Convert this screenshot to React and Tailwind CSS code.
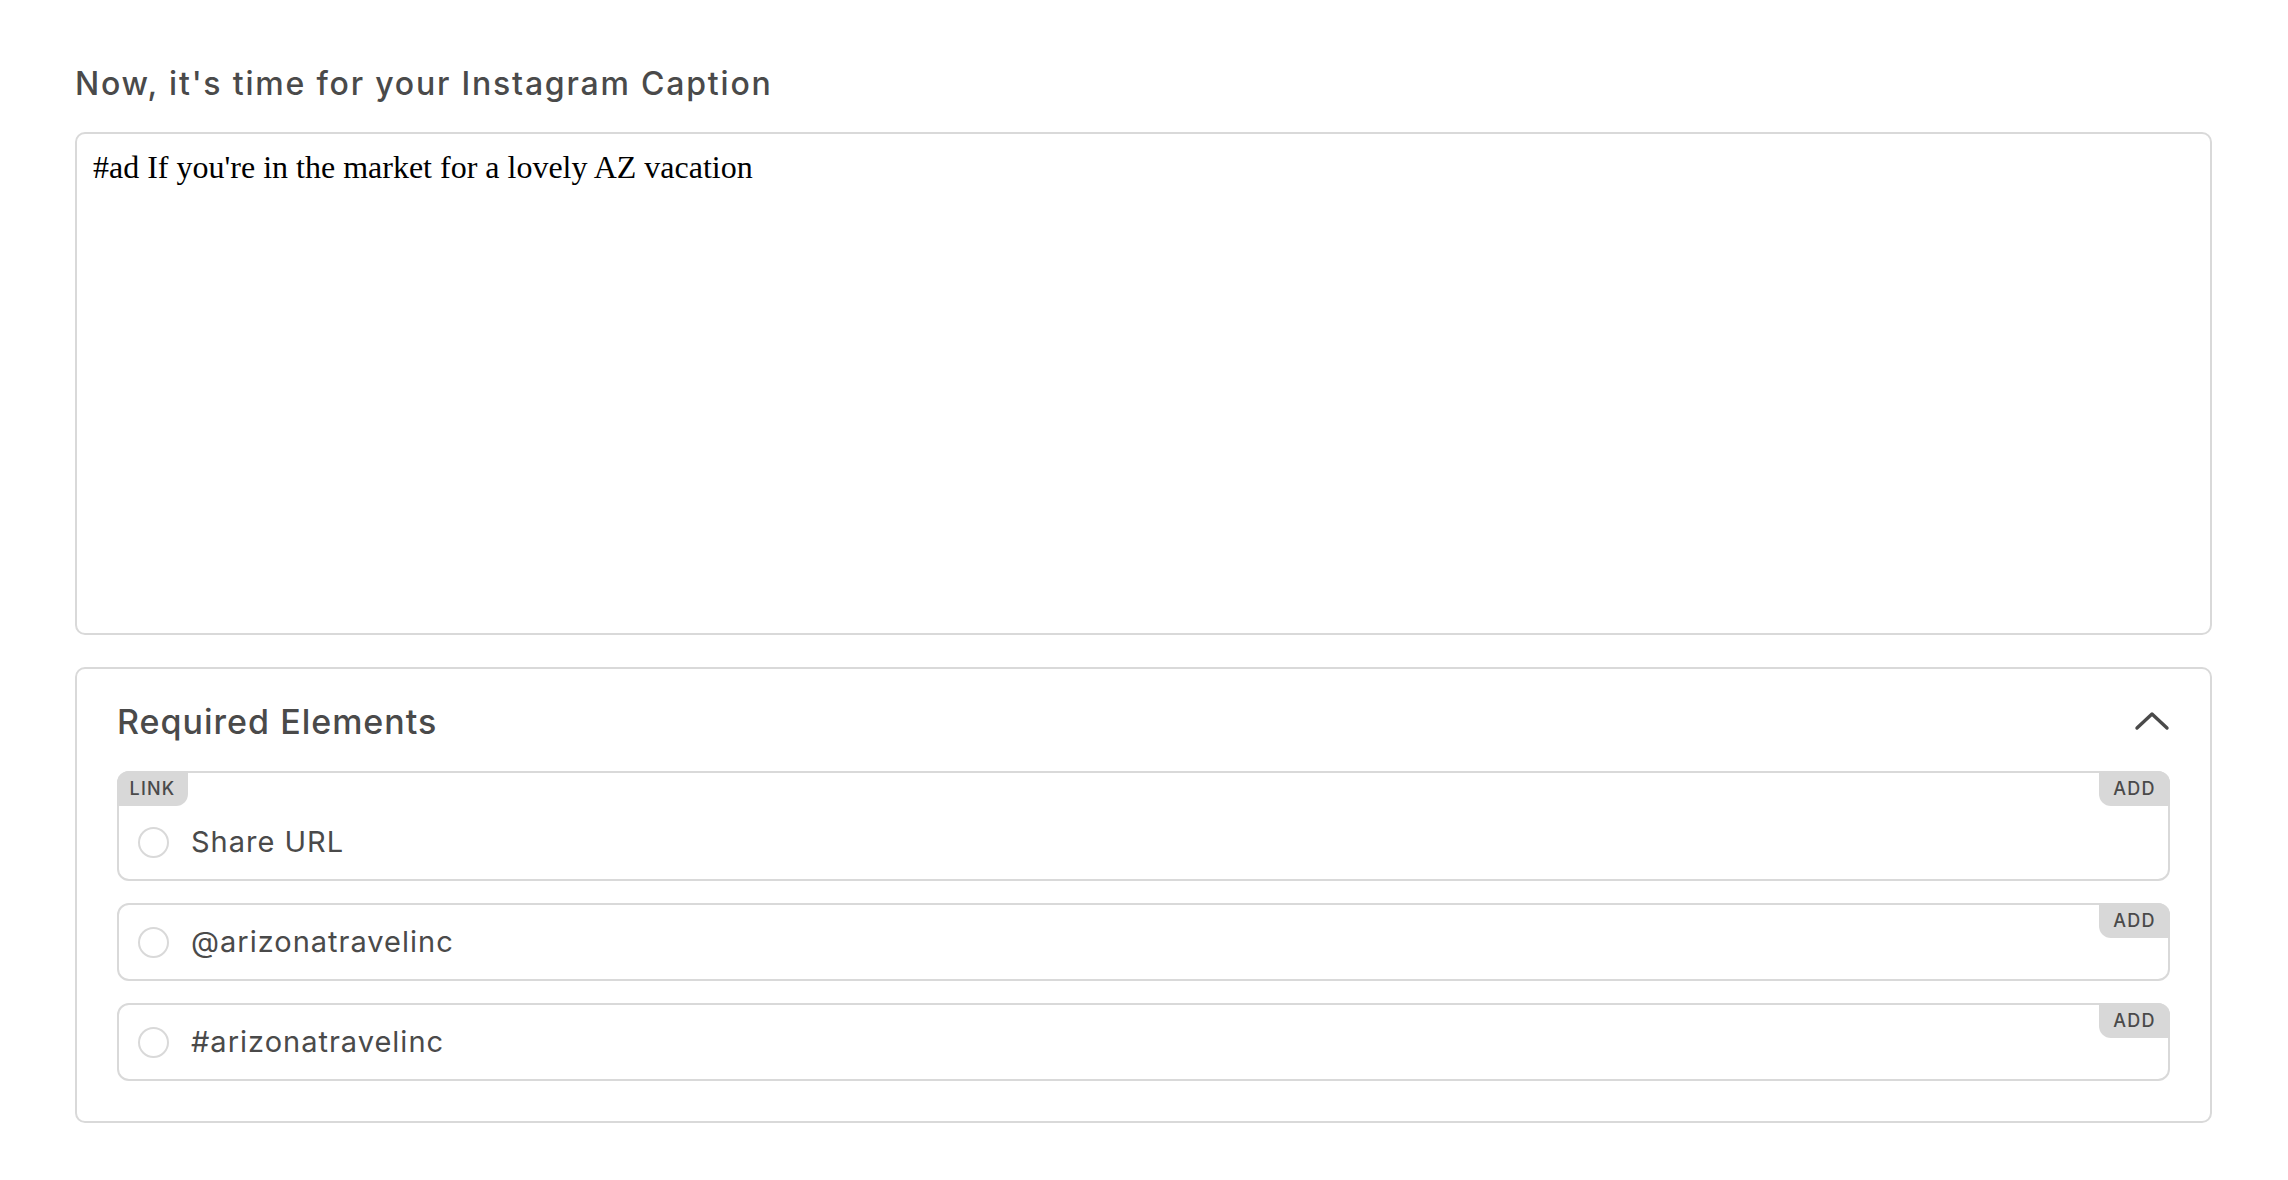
import React from "react";

const items = [
  { label: "Share URL", tag: "LINK" },
  { label: "@arizonatravelinc" },
  { label: "#arizonatravelinc" },
];

function ChevronUp() {
  return (
    <svg width="36" height="20" viewBox="0 0 36 20" fill="none" className="block">
      <polyline
        points="3,17 18,3 33,17"
        stroke="#4a4a4a"
        strokeWidth="3.4"
        strokeLinecap="round"
        strokeLinejoin="round"
      />
    </svg>
  );
}

function ElementRow({ label, tag }) {
  return (
    <div
      className={`relative rounded-[12px] border-2 border-[#d9d9d9] bg-white ${tag ? "pt-[32px]" : ""}`}
    >
      {tag && (
        <span className="absolute -left-[2px] -top-[2px] flex h-[35px] w-[71px] items-center justify-center rounded-tl-[12px] rounded-br-[12px] bg-[#d8d8d8] text-[18px] font-medium tracking-[1.2px] text-[#4a4a4a]">
          {tag}
        </span>
      )}
      <span className="absolute -right-[2px] -top-[2px] flex h-[35px] w-[71px] items-center justify-center rounded-tr-[12px] rounded-bl-[12px] bg-[#d8d8d8] text-[18px] font-medium tracking-[1.2px] text-[#4a4a4a]">
        ADD
      </span>
      <div className="flex h-[74px] items-center pl-[19px]">
        <span className="h-[31px] w-[31px] shrink-0 rounded-full border-2 border-[#d9d9d9]" />
        <span className="ml-[22px] text-[29px] tracking-[1px] text-[#4a4a4a]">{label}</span>
      </div>
    </div>
  );
}

export default function App() {
  return (
    <div
      className="min-h-screen bg-white pl-[75px] pr-[76px] pt-[62px]"
      style={{ fontFamily: "Inter, 'Noto Sans', sans-serif" }}
    >
      <h2 className="text-[32px] font-medium leading-[44px] tracking-[1.8px] text-[#4a4a4a]">
        Now, it's time for your Instagram Caption
      </h2>
      <textarea
        readOnly
        defaultValue="#ad If you're in the market for a lovely AZ vacation"
        className="mt-[26px] block h-[503px] w-full resize-none rounded-[10px] border-2 border-[#d9d9d9] px-[16px] pt-[15px] text-[32px] leading-[37px] text-black outline-none"
        style={{ fontFamily: "'Liberation Serif', 'Times New Roman', serif" }}
      />
      <section className="mt-[32px] rounded-[10px] border-2 border-[#d9d9d9] px-[40px] pb-[40px]">
        <div className="flex h-[102px] items-center justify-between pt-[2px]">
          <h3 className="text-[34px] font-medium tracking-[1px] text-[#4a4a4a]">Required Elements</h3>
          <ChevronUp />
        </div>
        <div className="flex flex-col gap-[22px]">
          {items.map((it) => (
            <ElementRow key={it.label} {...it} />
          ))}
        </div>
      </section>
    </div>
  );
}
